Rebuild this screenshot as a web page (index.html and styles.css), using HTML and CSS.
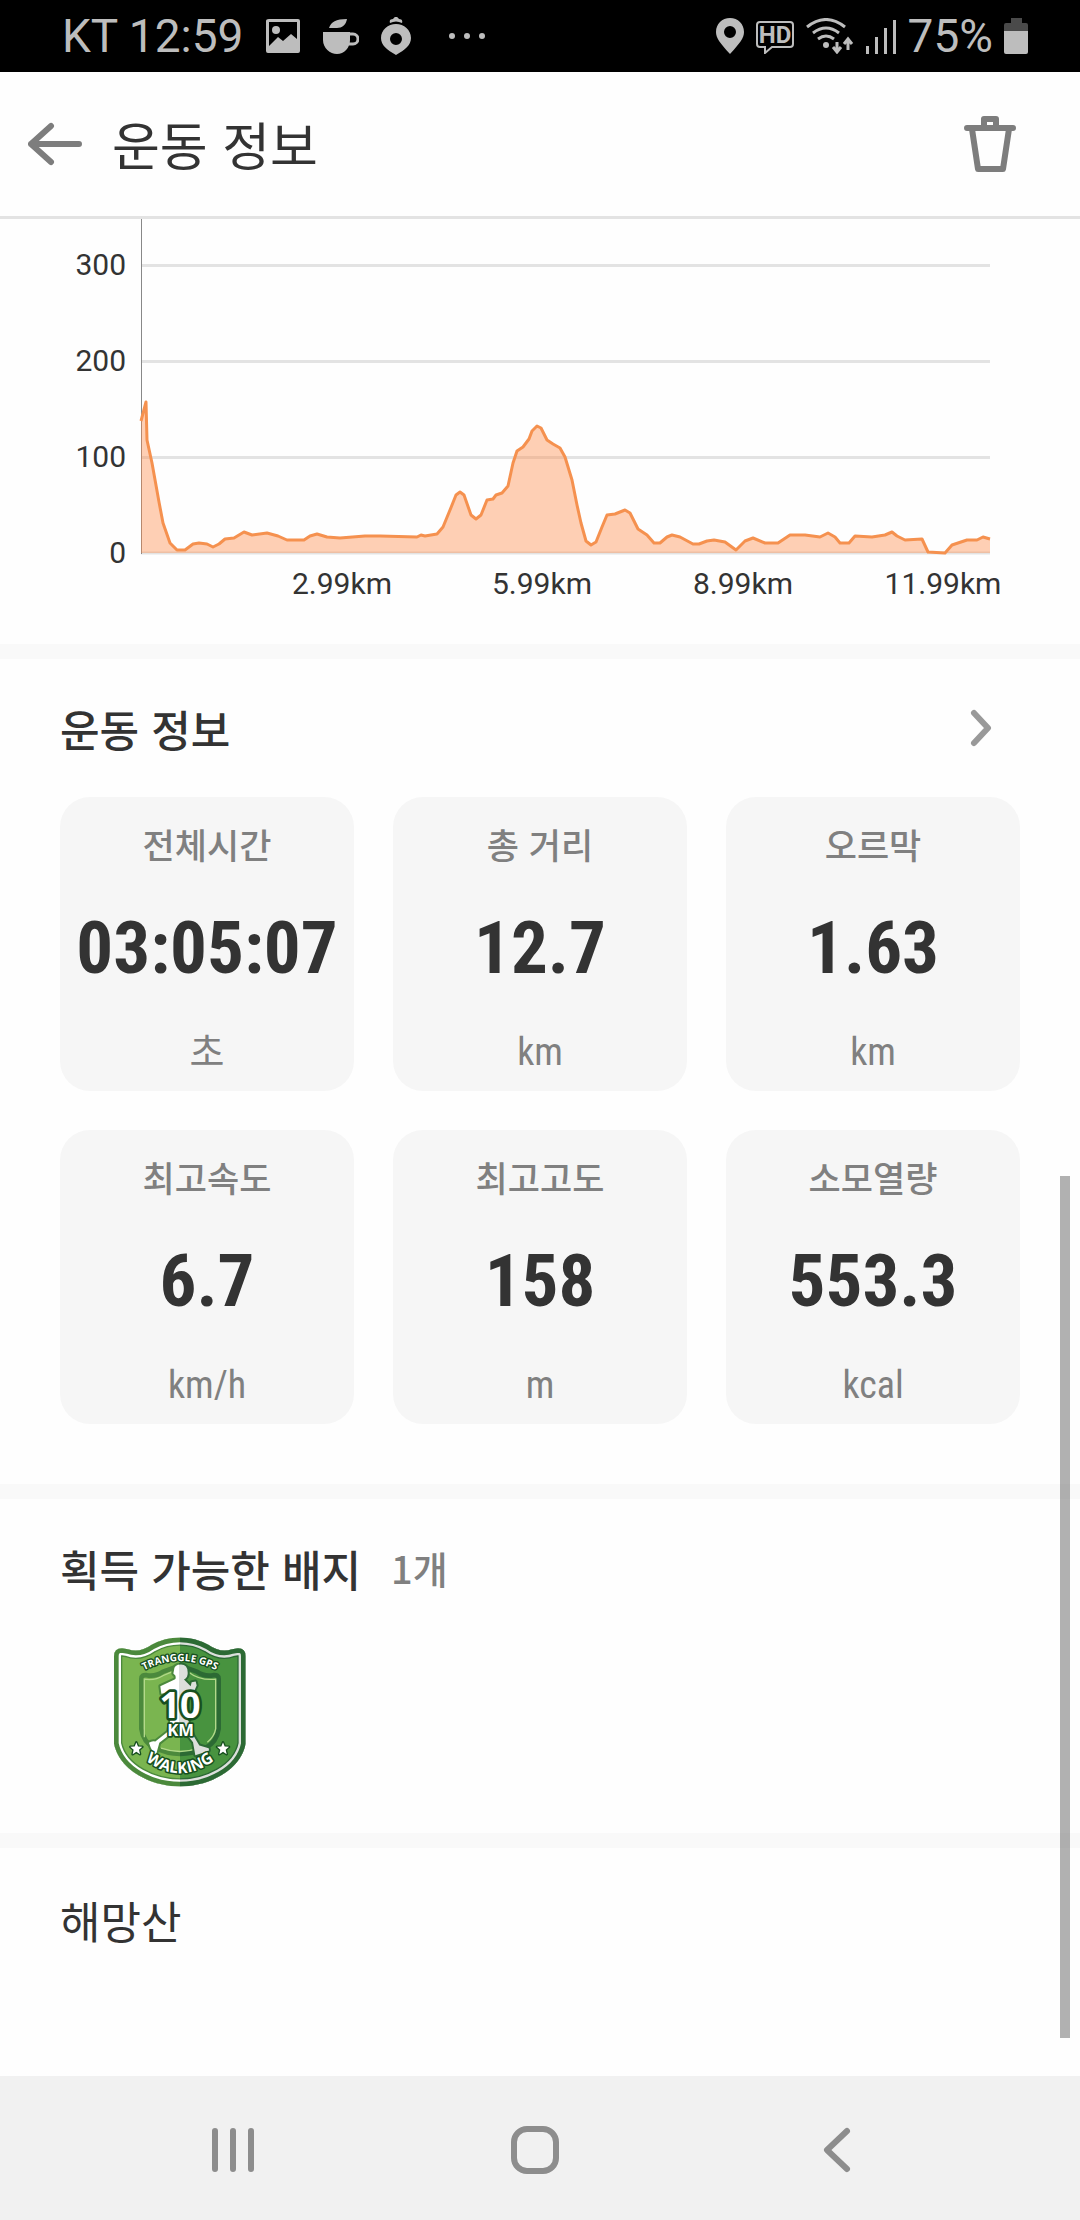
FILE: index.html
```html
<!DOCTYPE html>
<html lang="ko">
<head>
    <meta charset="UTF-8">
    <meta name="viewport" content="width=device-width, initial-scale=1.0">
    <title>운동 정보</title>
    <link rel="stylesheet" href="styles.css">
</head>
<body>
    <div class="status-bar">
        <div class="status-left">
            <span>KT 12:59</span>
            <svg width="36" height="36" viewBox="0 0 36 36"><path fill-rule="evenodd" d="M3 1h30q2 0 2 2v30q0 2-2 2H3q-2 0-2-2V3q0-2 3-2zM4 4v24l9-9 5 4 8-7 6 5V4z"/><circle cx="11" cy="12" r="4"/></svg>
            <svg width="36" height="36" viewBox="0 0 36 36"><path d="M0 14h27v8c0 8-6 14-13 14S0 30 0 22zM6 10C8 4 13 1 24 1c-1 6-5 9-10 9z"/><path class="line" d="M26 16h4a4 4 0 0 1 0 10h-4"/></svg>
            <svg width="30" height="38" viewBox="0 0 30 38"><path fill-rule="evenodd" d="M15 7c8 0 15 6 15 14 0 7-6 12-15 17C6 33 0 28 0 21 0 13 7 7 15 7zm0 9a6 6 0 1 0 0 12 6 6 0 0 0 0-12zM9 6c-1-3 1-4 3-4 2-3 4-3 6 0 2 0 4 1 3 4-4-2-8-2-12 0z"/></svg>
            <svg class="more" width="36" height="36" viewBox="0 0 36 36"><circle cx="3" cy="18" r="3"/><circle cx="18" cy="18" r="3"/><circle cx="33" cy="18" r="3"/></svg>
        </div>
        <div class="status-right">
            <svg width="28" height="36" viewBox="0 0 28 36"><path fill-rule="evenodd" d="M14 0c8 0 14 6 14 14 0 6-4 11-14 22C4 25 0 20 0 14 0 6 6 0 14 0zm0 8a6 6 0 1 0 0 12 6 6 0 0 0 0-12z"/></svg>
            <svg width="40" height="36" viewBox="0 0 40 36"><path class="thin" d="M5 4h30q3 0 3 3v19q0 3-3 3H17l-7 6v-6H5q-3 0-3-3V7q0-3 3-3z"/><text class="hd" x="20" y="25" text-anchor="middle">HD</text></svg>
            <svg width="48" height="36" viewBox="0 0 48 36"><path class="line" d="M1 9q19-15 38 0M7 15q13-10 26 0M12 21q8-6 16 0"/><circle cx="20" cy="27" r="3"/><path class="line" d="M31 24v9M27 29l4 5 4-5M42 32v-9M38 26l4-5 4 5"/></svg>
            <svg width="32" height="36" viewBox="0 0 32 36"><path d="M1 28h3v8H1zM10 19h3v17h-3zM19 10h3v26h-3zM28 2h3v34h-3z"/></svg>
            <span>75%</span>
            <svg width="24" height="36" viewBox="0 0 24 36"><path class="empty" d="M7 0h11v5h4q2 0 2 2v6H0V7q0-2 2-2h5z"/><path d="M0 13h24v21q0 2-2 2H2q-2 0-2-2z"/></svg>
        </div>
    </div>

    <header class="header">
        <button class="icon-button" aria-label="뒤로">
            <svg width="54" height="44" viewBox="0 0 54 44"><path d="M23 4L3 22l20 18M3 22h48"/></svg>
        </button>
        <h1>운동 정보</h1>
        <button class="icon-button" aria-label="삭제">
            <svg width="52" height="58" viewBox="0 0 52 58"><path d="M3 13h46M20 12V4h12v8M8 14l6 40h25l6-40"/></svg>
        </button>
    </header>

    <main class="content">
        <section class="section">
            <svg class="chart" viewBox="0 0 1080 425">
                <path class="grid" d="M141 46.500H990M141 142.500H990M141 238.500H990M141 334H990"/>
                <path class="axis" d="M141.500 0V335"/>
                <polygon class="area" points="141,334 141,202 146,183 147,221 152,244 159,283 163,304 170,324 177,331 185,331 193,325 199,324 207,325 213,328 219,325 225,320 234,319 244,313 252,316 267,314 278,317 287,321 304,321 310,317 317,315 327,318 340,319 365,317 380,317 417,318 421,316 425,317 437,315 443,308 450,291 456,276 460,273 464,276 471,296 476,300 481,296 487,281 493,280 496,276 502,274 508,267 513,244 517,232 523,228 529,220 532,212 537,207 541,209 547,221 553,225 560,229 565,238 572,261 577,286 581,304 586,322 591,326 596,323 602,308 607,296 615,295 625,291 630,294 638,310 647,316 654,324 660,324 667,318 672,316 680,318 693,325 699,325 707,322 714,321 725,323 736,331 745,322 753,319 765,324 778,324 790,316 805,316 820,318 828,314 835,318 840,324 849,324 855,317 872,318 885,316 892,313 897,317 905,321 922,320 928,333 945,334 952,326 967,321 977,321 983,318 990,320 990,334"/>
                <polyline class="trace" points="141,202 146,183 147,221 152,244 159,283 163,304 170,324 177,331 185,331 193,325 199,324 207,325 213,328 219,325 225,320 234,319 244,313 252,316 267,314 278,317 287,321 304,321 310,317 317,315 327,318 340,319 365,317 380,317 417,318 421,316 425,317 437,315 443,308 450,291 456,276 460,273 464,276 471,296 476,300 481,296 487,281 493,280 496,276 502,274 508,267 513,244 517,232 523,228 529,220 532,212 537,207 541,209 547,221 553,225 560,229 565,238 572,261 577,286 581,304 586,322 591,326 596,323 602,308 607,296 615,295 625,291 630,294 638,310 647,316 654,324 660,324 667,318 672,316 680,318 693,325 699,325 707,322 714,321 725,323 736,331 745,322 753,319 765,324 778,324 790,316 805,316 820,318 828,314 835,318 840,324 849,324 855,317 872,318 885,316 892,313 897,317 905,321 922,320 928,333 945,334 952,326 967,321 977,321 983,318 990,320"/>
                <g text-anchor="end">
                    <text x="126" y="56">300</text>
                    <text x="126" y="152">200</text>
                    <text x="126" y="248">100</text>
                    <text x="126" y="344">0</text>
                </g>
                <g text-anchor="middle">
                    <text x="342" y="375">2.99km</text>
                    <text x="542" y="375">5.99km</text>
                    <text x="743" y="375">8.99km</text>
                    <text x="943" y="375">11.99km</text>
                </g>
            </svg>
        </section>

        <section class="section stats">
            <div class="section-title">
                <h2>운동 정보</h2>
                <button class="icon-button detail" aria-label="자세히">
                    <svg width="24" height="40" viewBox="0 0 24 40"><path d="M5 5l14 15L5 35"/></svg>
                </button>
            </div>
            <div class="cards">
                <div class="card">
                    <div class="label">전체시간</div>
                    <div class="value">03:05:07</div>
                    <div class="unit">초</div>
                </div>
                <div class="card">
                    <div class="label">총 거리</div>
                    <div class="value">12.7</div>
                    <div class="unit">km</div>
                </div>
                <div class="card">
                    <div class="label">오르막</div>
                    <div class="value">1.63</div>
                    <div class="unit">km</div>
                </div>
                <div class="card">
                    <div class="label">최고속도</div>
                    <div class="value">6.7</div>
                    <div class="unit">km/h</div>
                </div>
                <div class="card">
                    <div class="label">최고고도</div>
                    <div class="value">158</div>
                    <div class="unit">m</div>
                </div>
                <div class="card">
                    <div class="label">소모열량</div>
                    <div class="value">553.3</div>
                    <div class="unit">kcal</div>
                </div>
            </div>
        </section>

        <section class="section badges">
            <div class="section-title">
                <h2>획득 가능한 배지</h2>
                <span class="count">1개</span>
            </div>
            <svg class="badge" width="132" height="150" viewBox="42 35 396 449">
                <defs>
                    <linearGradient id="face"><stop offset=".5" stop-color="#7ab550"/><stop offset=".5" stop-color="#48933f"/></linearGradient>
                    <linearGradient id="rim"><stop offset=".5" stop-color="#4b893c"/><stop offset=".5" stop-color="#2c6a34"/></linearGradient>
                    <linearGradient id="light"><stop offset=".5" stop-color="#ffffff"/><stop offset=".5" stop-color="#dcdfdc"/></linearGradient>
                    <path id="shield" d="M42 92Q42 68 66 68L84 71Q118 84 155 58Q195 36 240 36Q285 36 325 58Q362 84 396 71L414 68Q437 68 437 92V355C420 440 320 483 240 483C160 483 60 440 42 355Z"/>
                    <clipPath id="shield-clip"><use href="#shield"/></clipPath>
                    <path id="arc-top" d="M120 141Q240 72 360 141"/>
                    <path id="arc-bottom" d="M116 388Q240 498 364 388"/>
                </defs>
                <g clip-path="url(#shield-clip)" fill="none">
                    <use href="#shield" fill="url(#face)" stroke="url(#rim)" stroke-width="50"/>
                    <use href="#shield" stroke="url(#light)" stroke-width="42"/>
                    <use href="#shield" stroke="url(#rim)" stroke-width="28"/>
                </g>
                <path d="M124 160Q124 147 140 149Q165 155 190 138L240 120L290 138Q315 155 340 149Q356 147 356 160V310Q350 350 318 366Q240 405 162 366Q130 350 124 310Z" fill="url(#face)" stroke="url(#rim)" stroke-width="14"/>
                <path d="M133 335V161Q165 166 190 150L214 140M266 140Q300 166 347 161V310Q343 333 322 350M183 368Q240 388 296 368" fill="none" stroke="#b3d98b" stroke-width="4"/>
                <g stroke="url(#rim)" stroke-width="12" stroke-linejoin="round" paint-order="stroke">
                    <path fill="url(#light)" d="M222 134Q222 117 243 117Q263 118 263 140Q265 154 252 162L272 182L275 170L287 168L290 180L282 198L265 208L260 270L280 330L298 360L326 368Q330 378 318 379L286 389L279 350L240 300L211 326L178 352L168 388Q156 382 147 352Q156 345 166 348L204 318L216 260L209 200L184 205L181 182L224 162Q229 160 226 150L220 144Z"/>
                </g>
                <g class="badge-text" text-anchor="middle">
                    <text font-size="108" x="240" y="278" stroke-width="16">10</text>
                    <text font-size="50" x="242" y="331" stroke-width="10">KM</text>
                    <text font-size="30" stroke-width="8"><textPath href="#arc-top" startOffset="50%">TRANGGLE GPS</textPath></text>
                    <text font-size="47" stroke-width="9"><textPath href="#arc-bottom" startOffset="50%">WALKING</textPath></text>
                    <path stroke-width="8" d="M109 351l5 12 13 1-10 9 3 13-11-7-11 7 3-13-10-9 13-1zM369 351l5 12 13 1-10 9 3 13-11-7-11 7 3-13-10-9 13-1z"/>
                </g>
            </svg>
        </section>

        <section class="section place">
            <p>해망산</p>
        </section>

        <div class="scroll-thumb"></div>
    </main>

    <nav class="nav-bar">
        <button aria-label="최근 앱"><svg width="48" height="48" viewBox="0 0 48 48"><path d="M6 5v38M24 5v38M42 5v38"/></svg></button>
        <button aria-label="홈"><svg width="48" height="48" viewBox="0 0 48 48"><rect x="3" y="3" width="42" height="42" rx="13"/></svg></button>
        <button aria-label="이전"><svg width="48" height="48" viewBox="0 0 48 48"><path d="M34 5L14 24l20 19"/></svg></button>
    </nav>
</body>
</html>
```
FILE: styles.css
```css
* {
    box-sizing: border-box;
}

body {
    font-family: "Noto Sans CJK KR", sans-serif;
    margin: 0;
    min-height: 100vh;
    display: flex;
    flex-direction: column;
    background-color: #fefefe;
    color: #333;
}

h1, h2, p {
    margin: 0;
}

svg {
    display: block;
    flex-shrink: 0;
}

button {
    border: 0;
    padding: 0;
    background: none;
    display: flex;
    align-items: center;
    justify-content: center;
    cursor: pointer;
}

.status-bar {
    height: 72px;
    padding: 0 52px 0 62px;
    display: flex;
    align-items: center;
    justify-content: space-between;
    background-color: #000;
    color: #bdbdbd;
    font-family: Roboto, sans-serif;
    font-size: 46px;
    line-height: 74px;
}

.status-bar svg {
    fill: #bdbdbd;
}

.status-bar .line {
    fill: none;
    stroke: #bdbdbd;
    stroke-width: 3;
}

.status-bar .thin {
    fill: none;
    stroke: #bdbdbd;
    stroke-width: 2;
}

.status-bar .empty {
    fill: #4a4a4a;
}

.hd {
    font-size: 24px;
    font-weight: bold;
}

.status-left, .status-right {
    display: flex;
    align-items: center;
}

.status-left {
    gap: 22px;
}

.status-right {
    gap: 11px;
}

.more {
    margin-left: 16px;
}

.header {
    height: 147px;
    padding: 0 64px 0 28px;
    display: flex;
    align-items: center;
    gap: 30px;
    border-bottom: 3px solid #e3e3e3;
}

.header h1 {
    flex: 1;
    font-size: 52px;
    font-weight: 400;
    line-height: 72px;
}

.icon-button svg {
    fill: none;
    stroke: #7d7d7d;
    stroke-width: 6;
    stroke-linecap: round;
    stroke-linejoin: round;
}

.content {
    flex: 1;
    position: relative;
}

.section + .section {
    border-top: 15px solid #f9f9f9;
}

.chart {
    width: 100%;
    height: auto;
}

.chart text {
    font-family: Roboto, sans-serif;
    font-size: 30px;
    fill: #333;
}

.grid {
    stroke: #e3e3e3;
    stroke-width: 3;
}

.axis {
    stroke: #888;
    stroke-width: 1;
}

.area {
    fill: #ff8a45;
    fill-opacity: 0.4;
}

.trace {
    fill: none;
    stroke: #f5914f;
    stroke-width: 3;
    stroke-linejoin: round;
}

.stats {
    padding: 0 60px 60px;
}

.section-title {
    height: 138px;
    display: flex;
    align-items: center;
}

.section-title h2 {
    font-size: 43px;
    font-weight: 500;
    line-height: 64px;
}

.detail {
    width: 78px;
    height: 78px;
    margin-left: auto;
}

.detail svg {
    stroke: #999;
}

.cards {
    display: grid;
    grid-template-columns: repeat(3, minmax(0, 1fr));
    gap: 39px;
}

.card {
    height: 294px;
    padding: 22px 0 24px;
    display: flex;
    flex-direction: column;
    align-items: center;
    justify-content: space-between;
    border-radius: 30px;
    background-color: #f6f6f6;
}

.label {
    color: #808080;
    font-size: 35px;
    font-weight: 500;
    line-height: 50px;
}

.value {
    margin-bottom: 10px;
    font-family: "Roboto Condensed", "Noto Sans CJK KR", sans-serif;
    font-size: 73px;
    font-weight: 700;
    line-height: 100px;
}

.unit {
    color: #808080;
    font-family: "Roboto Condensed", "Noto Sans CJK KR", sans-serif;
    font-size: 38px;
    line-height: 30px;
}

.badges {
    padding: 0 60px 46px;
}

.count {
    margin-left: 30px;
    color: #808080;
    font-size: 38px;
    font-weight: 500;
    line-height: 64px;
}

.badge {
    margin-left: 54px;
}

.badge-text {
    font-family: "Open Sans", sans-serif;
    font-weight: 700;
    fill: #fff;
    stroke: #17501f;
    stroke-linejoin: round;
    paint-order: stroke;
}

.place {
    padding: 40px 60px;
    font-size: 44px;
    line-height: 64px;
}

/* lies over the right edge of the list */
.scroll-thumb {
    position: absolute;
    top: 957px;
    right: 10px;
    bottom: 38px;
    width: 10px;
    background-color: rgba(0, 0, 0, 0.3);
}

.nav-bar {
    height: 144px;
    padding: 4px 92px 0 82px;
    display: flex;
    background-color: #f1f1f1;
}

.nav-bar button {
    flex: 1;
}

.nav-bar svg {
    fill: none;
    stroke: #8d8d8d;
    stroke-width: 6;
    stroke-linecap: round;
    stroke-linejoin: round;
}
```
